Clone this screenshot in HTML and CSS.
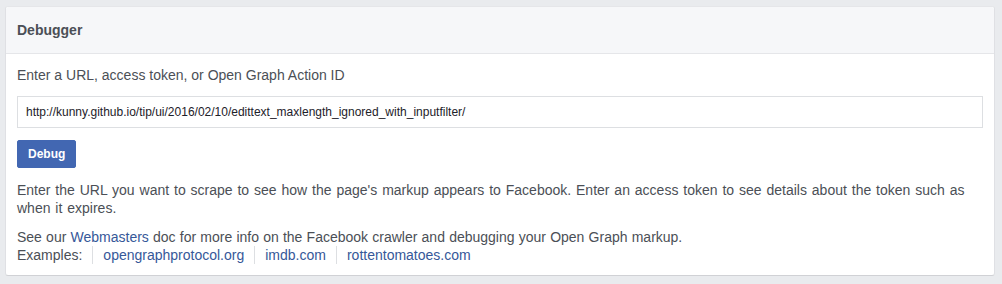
FILE: index.html
```html
<!DOCTYPE html>
<html lang="en">
<head>
    <meta charset="UTF-8">
    <meta name="viewport" content="width=device-width, initial-scale=1.0">
    <title>Sharing Debugger</title>
    <link rel="stylesheet" href="styles.css">
</head>
<body>
    <div class="card">
        <!-- Header -->
        <div class="card-header">Debugger</div>

        <!-- Form -->
        <div class="card-body">
            <label class="label" for="url-input">Enter a URL, access token, or Open Graph Action ID</label>
            <input type="text" id="url-input" class="url-input" value="http://kunny.github.io/tip/ui/2016/02/10/edittext_maxlength_ignored_with_inputfilter/">
            <button class="debug-btn">Debug</button>
            <p class="help intro">Enter the URL you want to scrape to see how the page's markup appears to Facebook. Enter an access token to see details about the token such as when it expires.</p>
            <p class="help">
                See our <a href="#">Webmasters</a> doc for more info on the Facebook crawler and debugging your Open Graph markup.<br>
                Examples:<span class="example"><a href="#">opengraphprotocol.org</a></span><span class="example"><a href="#">imdb.com</a></span><span class="example"><a href="#">rottentomatoes.com</a></span>
            </p>
        </div>
    </div>
</body>
</html>
```

FILE: styles.css
```css
body {
    margin: 0;
    padding: 6px 7px 8px 5px;
    font-family: "Liberation Sans", Arial, sans-serif;
    background: #e9ebee;
    color: #4b4f56;
}
.card {
    background: #fff;
    border: 1px solid #dddfe2;
    border-color: #e5e6e9 #dfe0e4 #d0d1d5;
    border-radius: 3px;
}
.card-header {
    height: 46px;
    line-height: 46px;
    padding: 0 11px;
    background: #f6f7f9;
    border-bottom: 1px solid #e5e6e9;
    border-radius: 3px 3px 0 0;
    font-size: 14px;
    font-weight: bold;
    color: #4b4f56;
}
.card-body {
    padding: 12px 11px 11px;
}
.label {
    display: block;
    font-size: 14px;
    line-height: 18px;
    margin-bottom: 12px;
}
.url-input {
    display: block;
    box-sizing: border-box;
    width: 100%;
    height: 32px;
    padding: 0 8px;
    border: 1px solid #dddfe2;
    border-radius: 0;
    font-family: "Liberation Sans", Arial, sans-serif;
    font-size: 12px;
    color: #1d2129;
    margin-bottom: 12px;
}
.debug-btn {
    display: block;
    height: 28px;
    padding: 0 10px;
    background: #4267b2;
    border: 1px solid #4267b2;
    border-radius: 2px;
    color: #fff;
    font-family: "Liberation Sans", Arial, sans-serif;
    font-size: 12px;
    font-weight: bold;
    cursor: pointer;
}
.debug-btn:hover {
    background: #365899;
}
.help {
    font-size: 14px;
    line-height: 18px;
    margin: 13px 0 0;
    word-spacing: 0.3px;
}
.help + .help {
    margin-top: 11px;
}
.intro {
    word-spacing: 1px;
}
a {
    color: #365899;
    text-decoration: none;
}
.example {
    display: inline-block;
    border-left: 1px solid #dddfe2;
    margin-left: 10px;
    padding-left: 10px;
}
```
